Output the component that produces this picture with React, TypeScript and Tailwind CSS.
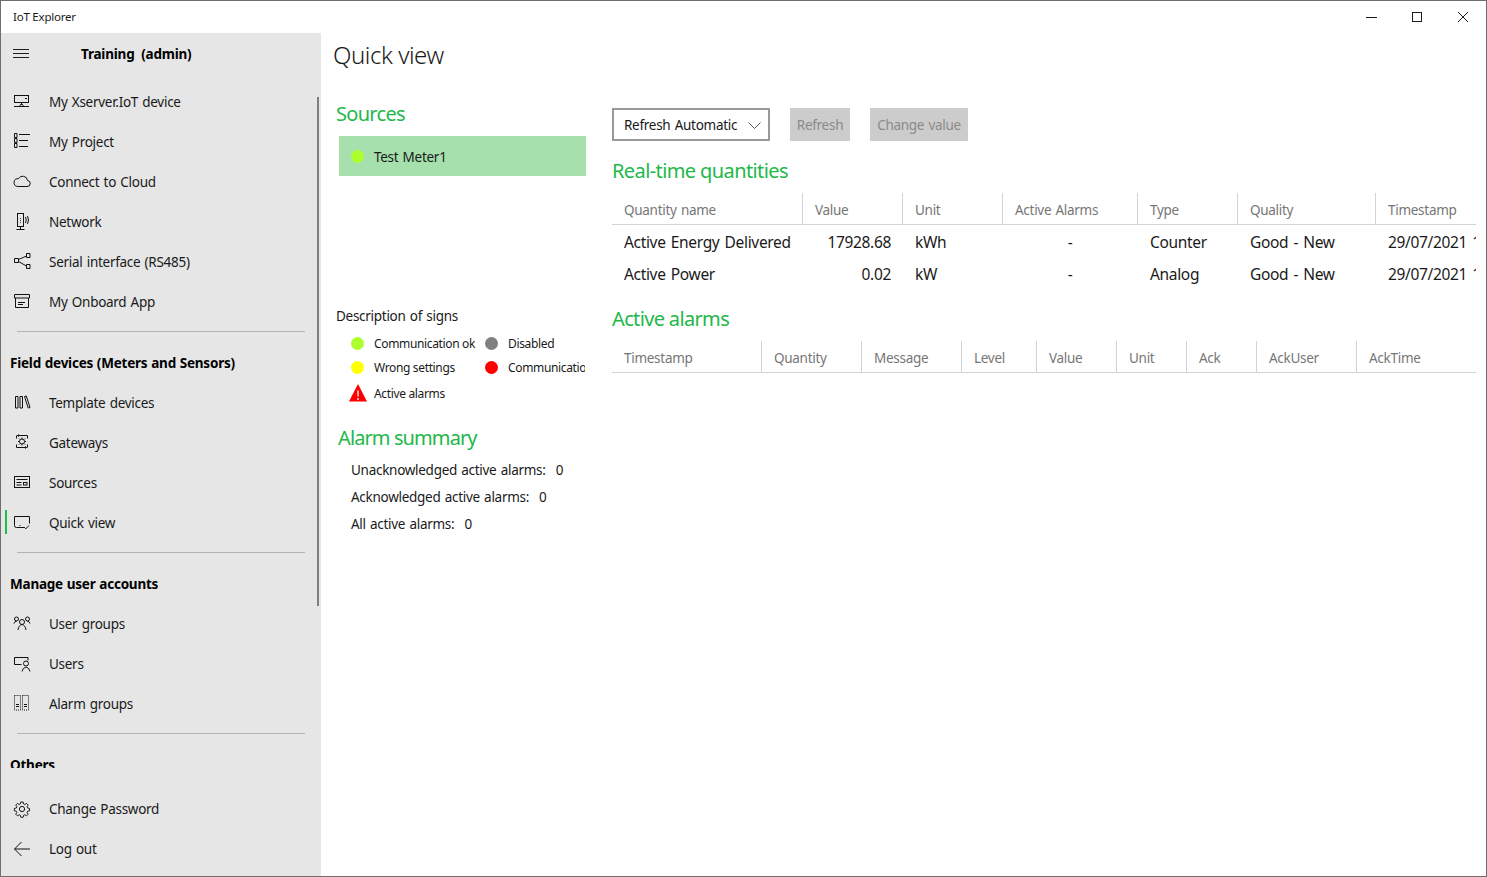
import React from 'react';

type IconProps = { children: React.ReactNode };

const Ico: React.FC<IconProps> = ({ children }) => (
  <svg width="18" height="18" viewBox="0 0 18 18" fill="none" stroke="#111111" strokeWidth="1" className="shrink-0">
    {children}
  </svg>
);

const ICONS: Record<string, React.ReactNode> = {
  device: (
    <>
      <rect x="1.5" y="2.5" width="14" height="7" />
      <path d="M12 5.5h2M8.5 9.5v2M6.5 13.5l1-2h2l1 2M1 13.5h15" />
    </>
  ),
  project: (
    <>
      <path d="M1.5 .5h2.5v4h-2.500zM1.500 5.500h2.500v4h-2.500zM1.500 10.500h2.500v4h-2.500z" />
      <path d="M6 1.500h11M6 7.500h9M6 13.500h9" />
    </>
  ),
  cloud: <path d="M4.500 13.500h9.500a3 3 0 0 0 .5-6 4.800 4.800 0 0 0-9-1.800 3.900 3.900 0 0 0-1 7.800z" />,
  network: (
    <>
      <rect x="4.500" y=".5" width="6" height="13" />
      <path d="M7.500 13.500v2.500M3.500 16.500h8M7.500 5v.8M7.500 7v.8M7.500 9v.8M12.500 4q1.500 3 0 6M14.500 3q2 4 0 8" />
    </>
  ),
  serial: (
    <>
      <path d="M1.500 5.500h4v4h-4zM13.500 .5h3.500v4h-3.500zM13.500 11.500h3.500v4h-3.500z" />
      <path d="M5.500 6.500l8-3.500M5.500 8.500l8 4.500" />
    </>
  ),
  onboard: <path d="M1.500 1.500h15v3.500h-15zM2.500 5v9.500h13v-9.500M5 11.500h5M5 9.500h7" />,
  template: (
    <>
      <path d="M2.500 2.500h2.500v11.500h-2.500zM7 2.500h2.500v11.500h-2.500z" />
      <path d="M11.500 2.500l1.800-.5 3.700 11.500-1.800.5z" />
    </>
  ),
  gateways: (
    <>
      <path d="M4.500 1.500h10v3M3.500 4.500v-3M3.500 10.500v3h10M14.500 10.500v3M6 .5l-1.500 1 1.500 1M12 12.500l1.500 1-1.500 1" />
      <circle cx="9" cy="7.500" r="2.500" />
      <path d="M9 3.500v1.500M9 10v1.500M5 7.500h1.500M11.500 7.500h1.500M6 4.500l1 1M12 4.500l-1 1M6 10.500l1-1M12 10.500l-1-1" />
    </>
  ),
  sources: (
    <>
      <rect x="1.500" y="2.500" width="15" height="11" />
      <path d="M3.500 5.500h11M3.500 8.500h5M3.500 11h5" />
      <rect x="10.500" y="8.500" width="3.500" height="2.500" />
    </>
  ),
  quick: (
    <>
      <path d="M11 13.500h-7.500a2 2 0 0 1-2-2v-9h15v7" />
      <path d="M6.500 11.500h1M11 13l1.800 1.800 3.200-3.300" />
    </>
  ),
  userGroups: (
    <>
      <circle cx="9" cy="7" r="2.500" />
      <path d="M5 15q.8-5 4-5.500q3.200.5 4 5.500" />
      <circle cx="3.500" cy="4" r="2" />
      <circle cx="14.500" cy="4" r="2" />
      <path d="M1 8.500q.6-2 2.500-2.500M17 8.500q-.6-2-2.500-2.500" />
    </>
  ),
  users: (
    <>
      <path d="M8.500 9.500h-7v-7h13.500v3" />
      <circle cx="13" cy="8.500" r="2.500" />
      <path d="M9 16.500q.5-3.500 4-4.500q3.500 1 4 4.500" />
    </>
  ),
  alarm: (
    <g strokeDasharray="1 1">
      <rect x="1.500" y=".5" width="6" height="14.500" />
      <rect x="9.500" y=".5" width="6" height="14.500" />
      <path d="M3 9.500h3M3 11.500h3M11 9.500h3M11 11.500h3" strokeDasharray="none" />
    </g>
  ),
  gear: (
    <>
      <circle cx="9" cy="9" r="2.600" />
      <path d="M7.700 1.500h2.600l.4 2.100 1.400.6 1.800-1.200 1.800 1.800-1.200 1.800.6 1.400 2.100.4v2.600l-2.100.4-.6 1.400 1.200 1.800-1.800 1.800-1.800-1.200-1.400.6-.4 2.100h-2.600l-.4-2.100-1.400-.6-1.800 1.200-1.800-1.800 1.200-1.800-.6-1.400-2.100-.4v-2.600l2.100-.4.600-1.400-1.200-1.800 1.800-1.800 1.800 1.200 1.400-.6z" transform="translate(.6 .6) scale(.93)" />
    </>
  ),
  back: <path d="M1.500 9h15.500M8.500 2l-7 7 7 7" />,
};

const NavItem: React.FC<{ icon: string; label: string; active?: boolean }> = ({ icon, label, active }) => (
  <div className="relative flex h-10 items-center gap-[18px] pl-3">
    {active && <div className="absolute left-1 top-[7px] h-6 w-0.5 bg-[#22b84a]" />}
    <Ico>{ICONS[icon]}</Ico>
    <span className="whitespace-nowrap text-[13.5px] leading-5 tracking-[-0.28px] [word-spacing:1px] text-[#1a1a1a]">{label}</span>
  </div>
);

const NavHeading: React.FC<{ label: string }> = ({ label }) => (
  <div className="flex h-10 items-center pl-[9px] text-[13.5px] font-bold tracking-[-0.22px] [word-spacing:0.5px] text-black">{label}</div>
);

const NavDivider: React.FC = () => <div className="ml-4 mt-[9px] h-px w-[288px] bg-[#b4b4b4]" />;

const Sidebar: React.FC = () => (
  <aside className="relative flex w-[320px] shrink-0 flex-col bg-[#e6e6e6]">
    <div className="flex h-[42px] items-center pl-3">
      <svg width="16" height="12" viewBox="0 0 16 12" stroke="#1f1f1f" className="shrink-0">
        <path d="M0 1.500h16M0 5.500h16M0 9.500h16" />
      </svg>
      <span className="ml-[52px] whitespace-pre text-[13.5px] font-bold tracking-[-0.2px] text-black">Training  (admin)</span>
    </div>
    <div className="mt-[7px] h-[686px] overflow-hidden">
      <NavItem icon="device" label="My Xserver.IoT device" />
      <NavItem icon="project" label="My Project" />
      <NavItem icon="cloud" label="Connect to Cloud" />
      <NavItem icon="network" label="Network" />
      <NavItem icon="serial" label="Serial interface (RS485)" />
      <NavItem icon="onboard" label="My Onboard App" />
      <NavDivider />
      <div className="mt-[11px]"><NavHeading label="Field devices (Meters and Sensors)" /></div>
      <NavItem icon="template" label="Template devices" />
      <NavItem icon="gateways" label="Gateways" />
      <NavItem icon="sources" label="Sources" />
      <NavItem icon="quick" label="Quick view" active />
      <NavDivider />
      <div className="mt-[11px]"><NavHeading label="Manage user accounts" /></div>
      <NavItem icon="userGroups" label="User groups" />
      <NavItem icon="users" label="Users" />
      <NavItem icon="alarm" label="Alarm groups" />
      <NavDivider />
      <div className="mt-[11px]"><NavHeading label="Others" /></div>
    </div>
    <div className="pt-[21px]">
      <NavItem icon="gear" label="Change Password" />
      <NavItem icon="back" label="Log out" />
    </div>
    {/* overlay scrollbar */}
    <div className="absolute left-[316px] top-16 h-[509px] w-0.5 bg-[#7f7f7f]" />
  </aside>
);

const Dot: React.FC<{ color: string }> = ({ color }) => (
  <span className="inline-block h-[13px] w-[13px] shrink-0 rounded-full" style={{ backgroundColor: color }} />
);

const Sign: React.FC<{ color: string; label: string; width: string }> = ({ color, label, width }) => (
  <div className={`flex h-6 items-center gap-[10px] overflow-hidden ${width}`}>
    <Dot color={color} />
    <span className="whitespace-nowrap pt-0.5 text-[12px] leading-4 tracking-[-0.35px] text-[#1a1a1a]">{label}</span>
  </div>
);

const SummaryRow: React.FC<{ label: string; value: string }> = ({ label, value }) => (
  <div className="flex h-[27px] items-center gap-[10px] pl-[15px] text-[13.5px] leading-5 tracking-[-0.28px] [word-spacing:1px] text-[#1a1a1a]">
    <span>{label}</span>
    <span>{value}</span>
  </div>
);

const LeftPane: React.FC = () => (
  <div className="w-[276px] shrink-0">
    <h2 className="h-[28px] text-[20px] leading-[28px] tracking-[-0.7px] text-[#22b84a]">Sources</h2>
    <div className="ml-[3px] mt-2 flex h-10 w-[247px] items-center gap-[10px] bg-[#a5e0ad] pl-3">
      <Dot color="#adff2f" />
      <span className="pt-0.5 text-[13.5px] leading-5 tracking-[-0.28px] [word-spacing:1px] text-[#1a1a1a]">Test Meter1</span>
    </div>
    <div className="mt-[130px] text-[13.5px] leading-5 tracking-[-0.28px] [word-spacing:1px] text-[#1a1a1a]">Description of signs</div>
    <div className="ml-[15px] mt-[5px] w-[235px]">
      <div className="flex">
        <Sign color="#adff2f" width="w-[134px]" label="Communication ok" />
        <Sign color="#808080" width="w-[100px]" label="Disabled" />
      </div>
      <div className="flex">
        <Sign color="#ffff00" width="w-[134px]" label="Wrong settings" />
        <Sign color="#ff0000" width="w-[100px]" label="Communication error" />
      </div>
      <div className="mt-[3px] flex h-6 items-center gap-[7px]">
        <svg width="18" height="18" viewBox="0 0 18 18" className="-ml-[2px] -mt-[2px] shrink-0">
          <path d="M9 0L18 17.500H0z" fill="#ff0000" />
          <path d="M9 6.500v6M9 14v2" stroke="#fff" strokeWidth="1.300" />
        </svg>
        <span className="text-[12px] leading-4 tracking-[-0.35px] text-[#1a1a1a]">Active alarms</span>
      </div>
    </div>
    <h2 className="ml-[2px] mt-[18px] h-[28px] text-[20px] leading-[28px] tracking-[-0.9px] text-[#22b84a]">Alarm summary</h2>
    <div className="mt-[4px]">
      <SummaryRow label="Unacknowledged active alarms:" value="0" />
      <SummaryRow label="Acknowledged active alarms:" value="0" />
      <SummaryRow label="All active alarms:" value="0" />
    </div>
  </div>
);

const HeaderRow: React.FC<{ cols: [string, number][] }> = ({ cols }) => (
  <div className="flex h-[32px] border-b border-[#d4d4d4]">
    {cols.map(([name, w], i) => (
      <div
        key={name}
        className={`flex items-center overflow-hidden whitespace-nowrap pl-3 pt-[3px] text-[13.5px] tracking-[-0.28px] [word-spacing:1px] text-[#767676] ${i < cols.length - 1 ? 'border-r border-[#d4d4d4]' : ''}`}
        style={{ width: w, flexGrow: i === cols.length - 1 ? 1 : 0 }}
      >
        {name}
      </div>
    ))}
  </div>
);

const QUANTITY_COLS: [string, number][] = [
  ['Quantity name', 191],
  ['Value', 100],
  ['Unit', 100],
  ['Active Alarms', 135],
  ['Type', 100],
  ['Quality', 138],
  ['Timestamp', 100],
];

const ALARM_COLS: [string, number][] = [
  ['Timestamp', 150],
  ['Quantity', 100],
  ['Message', 100],
  ['Level', 75],
  ['Value', 80],
  ['Unit', 70],
  ['Ack', 70],
  ['AckUser', 100],
  ['AckTime', 100],
];

const ROWS = [
  ['Active Energy Delivered', '17928.68', 'kWh', '-', 'Counter', 'Good - New', '29/07/2021 14:22:10'],
  ['Active Power', '0.02', 'kW', '-', 'Analog', 'Good - New', '29/07/2021 14:22:10'],
];

const DataRow: React.FC<{ row: string[] }> = ({ row }) => (
  <div className="flex h-8 items-center overflow-hidden whitespace-nowrap text-[15.5px] tracking-[-0.33px] [word-spacing:1.5px] text-[#1a1a1a]">
    <div className="w-[191px] shrink-0 pl-3">{row[0]}</div>
    <div className="w-[100px] shrink-0 pr-[12px] text-right">{row[1]}</div>
    <div className="w-[100px] shrink-0 pl-3">{row[2]}</div>
    <div className="w-[135px] shrink-0 pr-px text-center">{row[3]}</div>
    <div className="w-[100px] shrink-0 pl-3">{row[4]}</div>
    <div className="w-[138px] shrink-0 pl-3">{row[5]}</div>
    <div className="shrink-0 pl-3">{row[6]}</div>
  </div>
);

const RightPane: React.FC = () => (
  <div className="w-[864px] shrink-0 overflow-hidden">
    <div className="flex h-[33px] gap-5">
      <div className="flex w-[158px] items-center justify-between border-2 border-[#999999] pl-[10px] pr-[7px] pt-px text-[13.5px] tracking-[-0.28px] [word-spacing:1px] text-[#1a1a1a]">
        <span>Refresh Automatic</span>
        <svg width="13" height="7" viewBox="0 0 13 7" fill="none" stroke="#555555">
          <path d="M.5.5l6 6 6-6" />
        </svg>
      </div>
      <div className="flex w-[60px] items-center justify-center bg-[#cccccc] pt-0.5 text-[13.5px] tracking-[-0.28px] text-[#8a8a8a]">Refresh</div>
      <div className="flex w-[98px] items-center justify-center bg-[#cccccc] pt-0.5 text-[13.5px] tracking-[-0.28px] [word-spacing:1px] text-[#8a8a8a]">Change value</div>
    </div>
    <h2 className="mt-4 h-[28px] text-[20px] leading-[28px] tracking-[-0.6px] text-[#22b84a]">Real-time quantities</h2>
    <div className="mt-[8px]">
      <HeaderRow cols={QUANTITY_COLS} />
      <div className="mt-0.5">
        {ROWS.map((row) => (
          <DataRow key={row[0]} row={row} />
        ))}
      </div>
    </div>
    <h2 className="mt-[14px] h-[28px] text-[20px] leading-[28px] tracking-[-0.65px] text-[#22b84a]">Active alarms</h2>
    <div className="mt-[8px]">
      <HeaderRow cols={ALARM_COLS} />
    </div>
  </div>
);

export default function App() {
  return (
    <div className="flex h-[877px] w-[1487px] flex-col overflow-hidden border border-[#6e6e6e] bg-white font-['Noto_Sans',sans-serif]">
      <div className="flex h-[32px] shrink-0 items-center justify-between">
        <span className="pl-3 text-[11.5px] tracking-[-0.22px] text-[#1a1a1a]">IoT Explorer</span>
        <div className="flex items-center">
          <div className="flex w-[46px] justify-center">
            <svg width="12" height="12" viewBox="0 0 12 12" stroke="#1a1a1a"><path d="M1 6.500h11" /></svg>
          </div>
          <div className="flex w-[46px] justify-center">
            <svg width="12" height="12" viewBox="0 0 12 12" fill="none" stroke="#1a1a1a"><rect x="1.500" y="1.500" width="9" height="9" /></svg>
          </div>
          <div className="flex w-[46px] justify-center">
            <svg width="12" height="12" viewBox="0 0 12 12" fill="none" stroke="#1a1a1a"><path d="M1 1l10 10M11 1L1 11" /></svg>
          </div>
        </div>
      </div>
      <div className="flex min-h-0 flex-1">
        <Sidebar />
        <main className="min-w-0 flex-1 pl-3">
          <h1 className="mt-0.5 h-[40px] text-[24px] font-light leading-[40px] tracking-[-0.45px] text-[#1a1a1a]">Quick view</h1>
          <div className="ml-[3px] mt-[25px] flex">
            <LeftPane />
            <div className="pt-2">
              <RightPane />
            </div>
          </div>
        </main>
      </div>
    </div>
  );
}
